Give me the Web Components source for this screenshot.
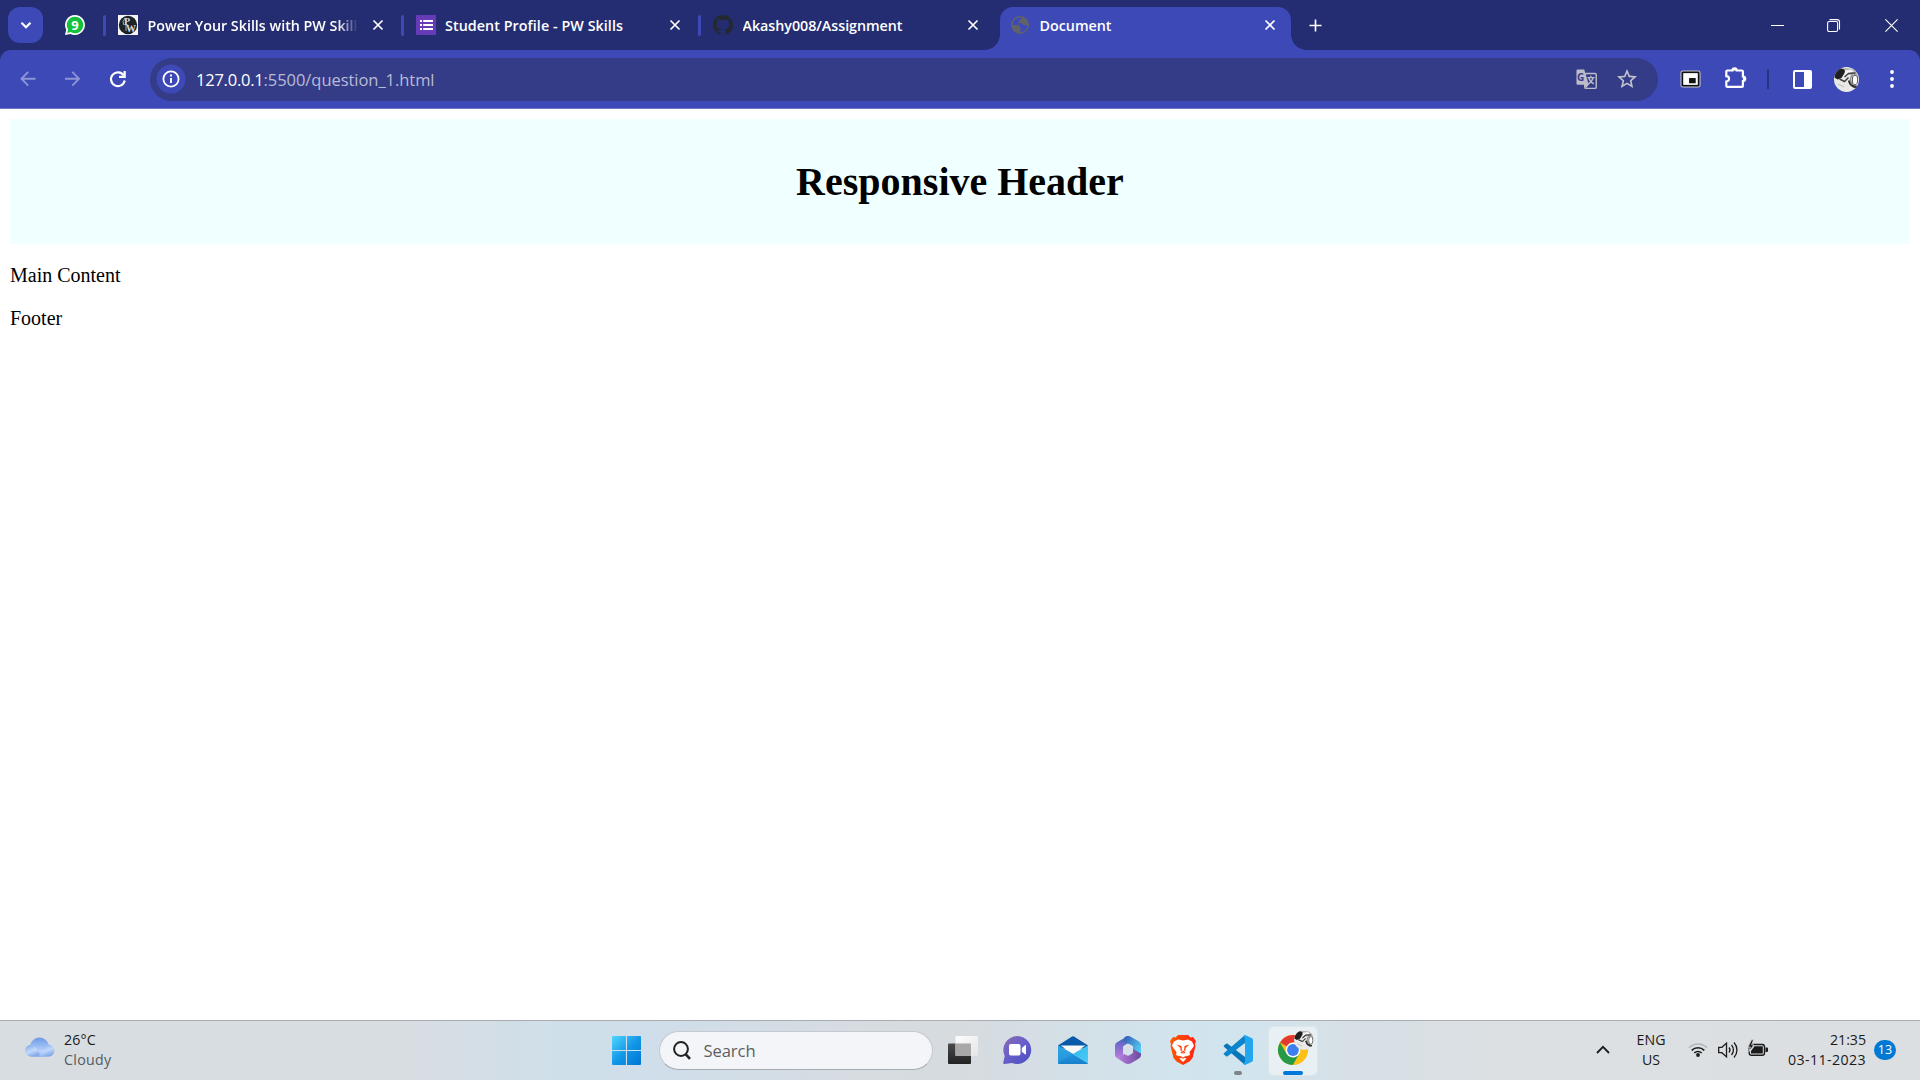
<!DOCTYPE html>
<html lang="en">
<head>
<meta charset="utf-8">
<title>Document</title>
<style>
html,body{margin:0;height:100%;overflow:hidden;background:#fff}
</style>
</head>
<body>
<desktop-screen></desktop-screen>
<script>
const define=(name,html,setup)=>{
  const t=document.createElement('template');t.innerHTML=html;
  customElements.define(name,class extends HTMLElement{
    constructor(){super();this.attachShadow({mode:'open'});}
    connectedCallback(){
      if(this.ready)return;this.ready=true;
      this.shadowRoot.append(t.content.cloneNode(true));
      if(setup)setup(this,this.shadowRoot);
    }
  });
};
const avatar=`<defs><clipPath id="c"><circle cx="12.5" cy="12.5" r="12.5"/></clipPath></defs><g clip-path="url(#c)"><path fill="#e9e9e7" d="M0 0h25v25H0z"/><path fill="#b5b5b3" d="M9 1l13 1 3 9-8-3-6-1z"/><path fill="#202020" d="M0 5q3-5 8-3.500 4 1 2.500 4.500l-3 5-4 1.500-3-2z"/><path fill="#f4f4f4" d="M11 3.500l6-1 3 2-6 2-3 3.500z"/><path fill="none" stroke="#444" stroke-width="1.500" d="M10.500 10l4-3.500 7-.5M5.500 12l5 2.500 4-4"/><path fill="none" stroke="#2b2b2b" stroke-width="2.400" d="M15 13.500c1 4 3 6.500 8 6.500"/><path fill="none" stroke="#8b8b8b" stroke-width="1.600" d="M18.500 8c-3 3-2.500 7 0 9.500"/><ellipse cx="21" cy="13" rx="2.600" ry="4.800" fill="#fff" stroke="#444" stroke-width=".9"/><path stroke="#bbb" d="M4 17l6 3"/></g>`;
const ICONS={
down:['0 0 12 8','<path d="M1.500 1.700 6 6.200l4.500-4.500" fill="none" stroke="#fff" stroke-width="2.200"/>'],
whatsapp:['0 0 20 20','<path fill="#fff" d="M10 0a10 10 0 1 1-4.600 18.900L0 20l1.200-5.200A10 10 0 0 1 10 0z"/><path fill="#15c13c" d="M10 1.700a8.300 8.300 0 1 1-4.300 15.400l-3.500.8.9-3.400A8.300 8.300 0 0 1 10 1.700z"/><text x="10" y="14.800" text-anchor="middle" font-family="Open Sans,sans-serif" font-weight="700" font-size="13" fill="#fff">9</text>'],
pw:['0 0 20 20','<path fill="#f5f5f5" d="M0 0h20v20H0z"/><circle cx="10" cy="10" r="9.200" fill="#1b2327"/><text font-family="Liberation Serif,serif" font-size="10" fill="#ddd"><tspan x="6" y="9.800">P</tspan><tspan x="8" y="16.500">W</tspan></text><path d="M6.800 3.500q-3 3-1 6.500M8 3.500V16" stroke="#ccc" stroke-width=".8" fill="none"/>'],
form:['0 0 20 20','<rect width="20" height="20" rx="1" fill="#673ab7"/><path fill="#fff" d="M4 5.100h2v2H4zM7.200 5.100H17v2H7.200zM4 9.100h2v2H4zM7.200 9.100H17v2H7.200zM4 13.100h2v2H4zM7.200 13.100H17v2H7.200z"/>'],
github:['0 0 16 16','<path fill="#24292f" d="M8 0C3.580 0 0 3.580 0 8c0 3.540 2.290 6.530 5.470 7.590.4.070.55-.17.55-.38 0-.19-.01-.82-.01-1.490-2.010.37-2.530-.49-2.690-.94-.09-.23-.48-.94-.82-1.130-.28-.15-.68-.52-.01-.53.63-.01 1.080.58 1.230.82.72 1.210 1.870.87 2.330.66.07-.52.28-.87.51-1.070-1.780-.2-3.640-.89-3.640-3.950 0-.87.31-1.590.82-2.150-.08-.2-.36-1.020.08-2.120 0 0 .67-.21 2.200.82.64-.18 1.320-.27 2-.27s1.360.09 2 .27c1.530-1.040 2.200-.82 2.200-.82.44 1.100.16 1.920.08 2.120.51.56.82 1.270.82 2.150 0 3.070-1.870 3.750-3.650 3.950.29.25.54.73.54 1.480 0 1.070-.01 1.930-.01 2.200 0 .21.15.46.55.38A8.010 8.010 0 0 0 16 8c0-4.420-3.580-8-8-8z"/>'],
globe:['0 0 18 18','<circle cx="9" cy="9" r="8.200" fill="none" stroke="#5f6368" stroke-width="1.500"/><path fill="#5f6368" d="M10.500.8c1 1.700-.7 2.200-1.700 2.800-.8.5.2 1.600-.8 2.300-.9.600-1.300.7-.3 1.400h3.200c1.100.2.700 1.900 1.800 2h4.200C17.500 4 14.500 1 10.500.8zM1 9h5.600c1.700.1 2.500 1 2.300 2.300-.3 1 .6.700 1.200 1.200.6.800-.4 1.200-.8 2.200-.3.900.1 1.700-.8 2.300C4.300 17 .8 13.500 1 9z"/>'],
x:['0 0 12 12','<path d="M1.500 1.500l9 9M10.500 1.500l-9 9" stroke="#fff" stroke-width="1.700"/>'],
plus:['0 0 14 14','<path d="M7 .5v13M.5 7h13" stroke="#fff" stroke-width="1.800"/>'],
min:['0 0 13 13','<path d="M0 6.500h13" stroke="#fff"/>'],
max:['0 0 13 13','<rect x=".6" y="2.500" width="10" height="10" rx="1.500" fill="none" stroke="#fff" stroke-width="1.100"/><path d="M2.500.6h7.500a2.500 2.500 0 0 1 2.500 2.500v7.500" fill="none" stroke="#fff" stroke-width="1.100"/>'],
wclose:['0 0 13 13','<path d="M.4.4l12.200 12.200M12.600.4.4 12.600" stroke="#fff" stroke-width="1.100"/>'],
back:['0 0 16 16','<path d="M16 8H2M8.500 1 1.500 8l7 7" fill="none" stroke="#8e95d6" stroke-width="1.900"/>'],
fwd:['0 0 16 16','<path d="M0 8h14M7.500 1l7 7-7 7" fill="none" stroke="#8e95d6" stroke-width="1.900"/>'],
reload:['0 0 16 16','<path d="M13.700 4.400A6.900 6.900 0 1 0 14.700 9.500" fill="none" stroke="#fff" stroke-width="2.200"/><path d="M15.800 0v7H9V4.800h4.500V0z" fill="#fff"/>'],
info:['0 0 30 30','<circle cx="15" cy="15" r="14.600" fill="#3c49b7"/><circle cx="15" cy="15" r="7.600" fill="none" stroke="#fff" stroke-width="1.800"/><path d="M15 14v5M15 10.500v2" stroke="#fff" stroke-width="1.900"/>'],
translate:['0 0 22 22','<rect x="9.200" y="4.700" width="12" height="15.600" rx="1.300" fill="none" stroke="#bcbdc9" stroke-width="1.500"/><path fill="#bcbdc9" d="M1.800.5h6.800l4.800 15.900H1.800A1.300 1.300 0 0 1 .5 15.100V1.800A1.300 1.300 0 0 1 1.800.5zM8.800 16.400h4.600l-3 3.700z"/><text x="1.100" y="13" font-family="Open Sans,sans-serif" font-weight="700" font-size="10.500" fill="#343c88">G</text><path d="M12 9h7.500M15.600 7.200V9M13.200 9c1 3 3 5.200 5.500 6.500M18 9c-.9 3.300-2.900 5.500-5.500 7" fill="none" stroke="#bcbdc9" stroke-width="1.400"/>'],
star:['0 0 24 24','<path fill="#c3c4ce" d="M22 9.240l-7.190-.62L12 2 9.190 8.630 2 9.240l5.460 4.730L5.820 21 12 17.270 18.180 21l-1.630-7.030L22 9.240zM12 15.400l-3.760 2.270 1-4.280-3.320-2.880 4.380-.38L12 6.100l1.710 4.040 4.380.38-3.320 2.880 1 4.280L12 15.400z"/>'],
pip:['0 0 22 19','<rect x=".4" y=".4" width="21.200" height="18.200" rx="2.500" fill="#c9c9c9"/><rect x="1.500" y="1.500" width="19" height="16" rx="1.500" fill="#111"/><rect x="3.300" y="3.300" width="15.400" height="12.400" fill="#fff"/><rect x="9.500" y="8.500" width="7" height="5.500" fill="#111"/>'],
puzzle:['0 0 22 22','<path d="M1.300 4.500a1 1 0 0 1 1-1h5.200a2.100 2.100 0 0 1 4.200 0h5.200a1 1 0 0 1 1 1v5a2.300 2.300 0 0 1 0 4.600v4.800a1 1 0 0 1-1 1H2.300a1 1 0 0 1-1-1v-4.300a2.500 2.500 0 0 0 0-5.500z" fill="none" stroke="#fff" stroke-width="2.200"/><path d="M7.500 3.500a2.100 2.100 0 0 1 4.200 0zM17.900 9.500a2.300 2.300 0 0 1 0 4.600z" fill="#fff"/>'],
panel:['0 0 19 19','<path fill="#fff" fill-rule="evenodd" d="M2 0h15a2 2 0 0 1 2 2v15a2 2 0 0 1-2 2H2a2 2 0 0 1-2-2V2a2 2 0 0 1 2-2zM2 2v15h9V2z"/>'],
avatar:['0 0 25 25',avatar],
dots:['0 0 4 18','<circle cx="2" cy="2" r="1.900" fill="#fff"/><circle cx="2" cy="9" r="1.900" fill="#fff"/><circle cx="2" cy="16" r="1.900" fill="#fff"/>'],
cloud:['0 0 30 20','<defs><linearGradient id="a" x1="0" y1="0" x2="0" y2="1"><stop stop-color="#6d9ae6"/><stop offset=".75" stop-color="#b9d3fb"/><stop offset="1" stop-color="#7da6e8"/></linearGradient><linearGradient id="b" x1="0" y1="0" x2=".5" y2="1"><stop stop-color="#7ba4e9"/><stop offset=".6" stop-color="#c2d9fb"/><stop offset="1" stop-color="#82a9e9"/></linearGradient></defs><path d="M6 19.500a6 6 0 0 1-1-11.500A9.800 9.800 0 0 1 24 8a6 6 0 0 1 0 11.500z" fill="url(#a)"/><path d="M6 19.500a5.900 5.900 0 1 1 3.500-10.600c3 2 3.500 6 6.500 10.600z" fill="url(#b)"/><path d="M24 19.500a5.900 5.900 0 1 0-4.500-10.200C17 12 18 16 13 19.500z" fill="url(#b)" opacity=".9"/>'],
start:['0 0 29 29','<defs><linearGradient id="a" gradientUnits="userSpaceOnUse" x1="0" y1="0" x2="29" y2="29"><stop stop-color="#51d5ff"/><stop offset=".5" stop-color="#1298e7"/><stop offset="1" stop-color="#0074d4"/></linearGradient></defs><path fill="url(#a)" d="M1 0h12.900v13.900H0V1a1 1 0 0 1 1-1zM15 0h13a1 1 0 0 1 1 1v12.900H15zM0 15h13.900v14H1a1 1 0 0 1-1-1zM15 15h14v13a1 1 0 0 1-1 1H15z"/>'],
search:['0 0 18 19','<circle cx="8" cy="8" r="6.900" fill="none" stroke="#222" stroke-width="2"/><path d="M12.800 13.300l4.200 4.500" stroke="#222" stroke-width="2.600"/>'],
task:['0 0 30 28','<defs><linearGradient id="a" x1="0" y1="0" x2="0" y2="1"><stop stop-color="#4a4a4a"/><stop offset="1" stop-color="#222"/></linearGradient><linearGradient id="b" x1="0" y1="0" x2="1" y2="1"><stop stop-color="#fff"/><stop offset="1" stop-color="#e5e5e5"/></linearGradient></defs><rect y="7.500" width="23" height="20.500" rx="1" fill="url(#a)"/><rect x="7.500" width="22.500" height="20" rx="1" fill="url(#b)" opacity=".95"/><path fill="#a8a8a8" d="M7.500 7.500H23V20H7.500z"/>'],
chat:['0 0 29 28','<defs><linearGradient id="a" x1="0" y1="0" x2=".9" y2="1"><stop stop-color="#8d6bb0"/><stop offset=".45" stop-color="#6b60c9"/><stop offset="1" stop-color="#4b50c2"/></linearGradient></defs><path fill="url(#a)" d="M14.500 0a14 14 0 1 1-5.500 27L1.500 28c-1 0-1.400-.8-1.200-1.800L1.700 20A14 14 0 0 1 14.500 0z"/><rect x="6" y="8" width="11.500" height="11.500" rx="1.800" fill="#fff"/><path fill="#fff" d="M18.800 12l3.200-2.700c.6-.4 1-.2 1 .5v8c0 .7-.5.9-1 .5l-3.200-2.500z"/>'],
mail:['0 0 30 28','<defs><linearGradient id="a" x1="0" y1="0" x2="1" y2="1"><stop stop-color="#35b7ec"/><stop offset="1" stop-color="#45cdf8"/></linearGradient><linearGradient id="b" x1="0" y1="0" x2="0" y2="1"><stop stop-color="#2fa6e4"/><stop offset="1" stop-color="#1680cc"/></linearGradient></defs><path fill="#0a58a8" d="M0 9.500 14 .5q1-.6 2 0l14 9-4 3H4z"/><path fill="#f8f8f8" d="M2.500 9.500h25L15 18z"/><path fill="url(#b)" d="M0 9.500 15 18l15 9.200q-.2.800-1 .8H1a1 1 0 0 1-1-1z"/><path fill="url(#a)" d="M30 9.500V27.200L15 18z"/><path fill="#2ba3e3" d="M0 9.500 15 18 0 27z" opacity=".6"/>'],
m365:['0 0 26 28','<defs><linearGradient id="a" x1="0" y1="0" x2="0" y2="1"><stop stop-color="#3b62b7"/><stop offset=".55" stop-color="#876fd1"/><stop offset="1" stop-color="#bb79dc"/></linearGradient><linearGradient id="b" x1="0" y1="0" x2="1" y2=".8"><stop stop-color="#3358b4"/><stop offset="1" stop-color="#58d4f8"/></linearGradient><linearGradient id="d" x1="0" y1="0" x2="1" y2="0"><stop stop-color="#ba80e1"/><stop offset="1" stop-color="#6b4a9d"/></linearGradient></defs><path fill="url(#a)" d="M13 0 2 6.300Q0 7.500 0 9.800v9q0 2.200 2 3.200l6-3.300V10.500L17 5z"/><path fill="url(#b)" d="M9.500 1.200q3.500-2.200 7 0L24 5.500q2 1.200 2 3.500v10l-8-4.700v-4L9 6z"/><path fill="url(#d)" d="M2 22l7-4 4 1.500 5-3V13l8 4.500v1.800q0 2-2 3.200l-8 4.700q-3 1.500-6 0z"/><path fill="#d3e0e9" d="M8.300 11.500q0-1.400 1.200-2l2.300-1.400q1.200-.7 2.400 0l2.300 1.400q1.200.6 1.200 2v4.500q0 1.300-1.200 2l-2.300 1.300q-1.200.7-2.400 0L9.500 18q-1.200-.7-1.200-2z"/>'],
brave:['0 0 26 30','<defs><linearGradient id="a"><stop stop-color="#ff5a00"/><stop offset="1" stop-color="#ff2414"/></linearGradient></defs><path fill="url(#a)" d="M8 0h10l2.500 2.500L23 2l3 4-1 3 .5 2-3 12-3 3.500L13 30l-6.500-3.500-3-3.500-3-12L1 9 0 6l3-4 2.500.5z"/><path fill="#fff" d="M8 4.500l5 1 5-1 4 2 2 4-1 2-3.500 4.500.5 3-4 1.500L13 23.500 10 21.500 6 20l.5-3L3 12.500l-1-2 2-4zM13 22l3.500 1.500L13 27l-3.500-3.500z"/><path fill="#ff4310" d="M6.500 9.500 11.500 11l.6 5-1.600 1.500 2.500 1.700 2.500-1.700-1.600-1.500.6-5 5-1.500-4 3.500.2 2.500-2.700.2.500 3-.5.500-.5-.5.500-3-2.700-.2.200-2.500zM9.500 20.500 13 22.500l3.500-2-.2 1.600L13 23.700l-3.300-1.600z"/>'],
vscode:['0 0 30 30','<path fill="#0877b9" d="M1 10.500l2-1.800q.8-.5 1.600 0L22 22v8L.9 11.800Q.2 11 1 10.500z"/><path fill="#0a84cb" d="M1 19.500l2 1.800q.8.500 1.600 0L22 8V0L.9 18.200q-.7.800.1 1.300z"/><path fill="#24a5ef" d="M22 0l7 3.200q1 .5 1 1.700v20.200q0 1.200-1 1.700L22 30q-1 0-1.500-1.500L22 27V3l-1.500-1.500Q21 0 22 0z"/>'],
chrome:['0 0 30 30','<circle cx="15" cy="15" r="15" fill="#fbc116"/><path fill="#e33b2e" d="M15 15 2 7.500A15 15 0 0 1 28 7.500H15z"/><path fill="#259b48" d="M15 15l6.500 3.800L15 30A15 15 0 0 1 2 7.500l6.500 11.200z"/><path fill="#fbc116" d="M15 8h13a15 15 0 0 1-13 22l6.400-11.200z"/><circle cx="15" cy="15" r="7.400" fill="#fff"/><circle cx="15" cy="15" r="5.900" fill="#3d7fee"/>'],
up:['0 0 14 9','<path d="M1 8l6-6.200L13 8" fill="none" stroke="#1b1b1b" stroke-width="1.800"/>'],
wifi:['0 0 20 15','<g fill="none" stroke-width="1.400"><path d="M1 5.700a12.700 12.700 0 0 1 18 0" stroke="#b3b5b8"/><path d="M3.700 8.400a8.900 8.900 0 0 1 12.600 0M6.300 11a5.200 5.200 0 0 1 7.400 0" stroke="#1b1b1b" stroke-width="1.600"/></g><circle cx="10" cy="13" r="1.900" fill="#1b1b1b"/>'],
volume:['0 0 20 18','<g fill="none" stroke="#1b1b1b" stroke-width="1.300"><path d="M.7 6.300v5.400h3.200l4.600 4.200V2.100L3.900 6.300z"/><path d="M11 6.500a4 4 0 0 1 0 5M13.500 4a7.500 7.500 0 0 1 0 10"/><path d="M16 1.500a11 11 0 0 1 0 15"/></g>'],
battery:['0 0 20 16','<rect x="1.200" y="4.500" width="15.300" height="10.700" rx="2.300" fill="none" stroke="#1b1b1b" stroke-width="1.400"/><path fill="#1b1b1b" d="M17.500 7.500h1.500q1 0 1 1v2.500q0 1-1 1h-1.500zM6.500 6.300h8.300v7.200H3V11z"/><path fill="#1b1b1b" stroke="#dde0e3" stroke-width=".8" d="M3.500-.2 0 7h2.300L1 11.500 6 5H3.700L5.500-.2z"/>']
};
/* ui-icon: vector glyph chosen by name, sized by w and h */
define('ui-icon','<style>:host{display:block;flex:none}svg{display:block;width:100%;height:100%;overflow:visible}</style>',(el,r)=>{
  const [vb,body]=ICONS[el.getAttribute('name')];
  el.style.width=el.getAttribute('w')+'px';el.style.height=el.getAttribute('h')+'px';
  const t=document.createElement('template');t.innerHTML=`<svg viewBox="${vb}">${body}</svg>`;r.append(t.content);
});
/* fit-text: one line of text tracked to a fixed measure */
define('fit-text','<style>:host{display:block;flex:none;white-space:pre}span{display:inline-block}</style><span><slot></slot></span>',(el,r)=>{
  const s=r.querySelector('span'),w=+el.getAttribute('w'),n=el.textContent.length;
  s.style.letterSpacing=((w-s.getBoundingClientRect().width)/n).toFixed(3)+'px';
  el.style.width=w+'px';
});
define('browser-tab',`<style>
:host{display:flex;width:297.500px;height:50px;flex:none;align-items:center;box-sizing:border-box;padding:0 0 0 12px;font:600 14.300px "Open Sans",sans-serif;color:#fff}
.t{width:210px;margin-left:9.500px;overflow:hidden;flex:none}
:host([fade]) .t{-webkit-mask:linear-gradient(90deg,#000 190px,transparent 210px);mask:linear-gradient(90deg,#000 190px,transparent 210px)}
.x{margin-left:14px}
.sep{width:3px;height:21px;border-radius:2px;background:#3c49b7;margin-left:auto}
:host([last]) .sep,:host([active]) .sep{display:none}
:host([active]){position:relative;width:291px;margin-left:1.500px;height:43px;margin-top:7px;background:#3c49b7;border-radius:13px 13px 0 0;padding:0 0 7px 11px}
:host([active]) .t{width:212px;margin-left:10.500px}
:host([active]) .x{margin-left:12.500px}
:host([active])::before,:host([active])::after{content:"";position:absolute;bottom:0;left:-15px;width:15px;height:15px;background:radial-gradient(circle at 0 0,transparent 14.500px,#3c49b7 15px)}
:host([active])::after{left:auto;right:-15px;background:radial-gradient(circle at 100% 0,transparent 14.500px,#3c49b7 15px)}
</style><slot name="icon"></slot><div class="t"><slot></slot></div><ui-icon class="x" name="x" w="12" h="12"></ui-icon><i class="sep"></i>`);
define('tab-strip',`<style>
:host{display:flex;height:50px;background:#252d72;align-items:center}
.s{display:flex;align-items:center;justify-content:center;width:35px;height:36px;border-radius:12px;background:#3c49b7;margin-left:8px}
.wa{margin-left:22px}.sep{width:3px;height:21px;border-radius:2px;background:#3c49b7;margin-left:18px}
.plus{margin-left:18px}.win{display:flex;align-items:center;margin-left:auto;padding-right:22.500px}
</style>
<div class="s"><ui-icon name="down" w="12" h="8"></ui-icon></div>
<ui-icon class="wa" name="whatsapp" w="20" h="20"></ui-icon><i class="sep"></i>
<browser-tab fade><ui-icon slot="icon" name="pw" w="20" h="20"></ui-icon><fit-text w="217">Power Your Skills with PW Skills</fit-text></browser-tab>
<browser-tab><ui-icon slot="icon" name="form" w="20" h="20"></ui-icon><fit-text w="178">Student Profile - PW Skills</fit-text></browser-tab>
<browser-tab last><ui-icon slot="icon" name="github" w="20" h="20"></ui-icon><fit-text w="160">Akashy008/Assignment</fit-text></browser-tab>
<browser-tab active><ui-icon slot="icon" name="globe" w="18" h="18"></ui-icon><fit-text w="72">Document</fit-text></browser-tab>
<ui-icon class="plus" name="plus" w="13" h="13"></ui-icon>
<div class="win"><ui-icon name="min" w="13" h="13"></ui-icon><ui-icon name="max" w="13" h="13" style="margin:0 44.500px 0 43px"></ui-icon><ui-icon name="wclose" w="13" h="13"></ui-icon></div>`);
define('nav-bar',`<style>
:host{display:block;height:59px;background:#252d72}
.b{display:flex;align-items:center;height:59px;box-sizing:border-box;padding:0 0 0 20px;background:#3c49b7;border-bottom:1px solid #6c76ca;border-radius:11px 11px 0 0}
.o{display:flex;align-items:center;width:1508px;height:43px;border-radius:22px;background:#343c88;margin-left:24px;box-sizing:border-box;padding:0 18.500px 0 6.500px;font:16.500px "Open Sans",sans-serif;color:#b9bbd4}
.h{color:#fff;margin-left:10px}
.sep{width:2px;height:20px;background:#2a3380;margin-left:20px}
</style><div class="b">
<ui-icon name="back" w="15.500" h="15.500"></ui-icon><ui-icon name="fwd" w="15.500" h="15.500" style="margin-left:29.500px"></ui-icon><ui-icon name="reload" w="16" h="16" style="margin-left:29px"></ui-icon>
<div class="o"><ui-icon name="info" w="30" h="30"></ui-icon><fit-text class="h" w="67.500">127.0.0.1</fit-text><fit-text w="171">:5500/question_1.html</fit-text>
<ui-icon name="translate" w="21" h="21" style="margin-left:auto"></ui-icon><ui-icon name="star" w="24" h="24" style="margin-left:18px"></ui-icon></div>
<ui-icon name="pip" w="21" h="18" style="margin-left:22.500px"></ui-icon>
<ui-icon name="puzzle" w="22" h="22" style="margin-left:24px;margin-top:-3px"></ui-icon>
<i class="sep"></i>
<ui-icon name="panel" w="19" h="19" style="margin-left:23.500px"></ui-icon>
<ui-icon name="avatar" w="25" h="25" style="margin-left:22.500px"></ui-icon>
<ui-icon name="dots" w="4" h="18" style="margin-left:30.500px"></ui-icon>
</div>`);
define('web-page',`<style>
:host{display:block;flex:1;padding:10px;background:#fff;font:20px/23px "Liberation Serif",serif;color:#000;box-sizing:border-box}
header{display:flex;height:125px;align-items:center;justify-content:center;background:#f0ffff}
h1{margin:0;font-size:40px;line-height:46px}
p{margin:20px 0}
</style><header><h1>Responsive Header</h1></header><p>Main Content</p><p>Footer</p>`);
define('task-bar',`<style>
:host{display:flex;height:60px;box-sizing:border-box;border-top:1px solid #aaaeb2;align-items:center;font:14.200px/20px "Open Sans",sans-serif;color:#1b1b1b;
background:linear-gradient(90deg,#d8dde1 0,#d8dde2 400px,#cfdfe9 560px,#cfdeea 650px,#d6dce1 850px,#d6dbdf 960px,#d2e3ec 1150px,#d1e5ef 1230px,#d7e0e6 1350px,#dce0e3 1500px,#dbdfe2 100%)}
.w{margin:-2px 0 0 9px;width:548px}.c{color:#555b60}
.s{display:flex;align-items:center;box-sizing:border-box;width:274px;height:39px;border-radius:20px;background:#f3f5f8;border:1px solid #c3c9cf;border-bottom-color:#a4abb1;margin-left:17.500px;padding-left:13px;font-size:16.600px;color:#5d5f61}
.col{display:flex;flex-direction:column;align-items:center}
.r{align-items:flex-end}
.app{position:relative;display:flex;align-items:center;justify-content:center;width:48px;height:48px;box-sizing:border-box;margin-left:16px}
.app.on{background:#e9f0f4;border-radius:5px;box-shadow:0 0 0 1px #dde6eb}
.app ui-icon:first-child{margin-top:-1px}
.app::after{content:"";position:absolute;bottom:0;left:20px;width:8px;height:4px;border-radius:2px;background:#7d8387}
.app.on::after{left:14px;width:20px;background:#0078d7}
.av{position:absolute;left:25px;top:3px}
.n{width:22px;height:20px;border-radius:11px;background:#0078d4;color:#fff;font-size:12.500px;display:flex;justify-content:center;align-items:center;margin:-2px 0 0 8px}
</style>
<ui-icon name="cloud" w="30" h="20" style="margin:-7px 0 0 25px"></ui-icon>
<div class="w"><fit-text w="32">26°C</fit-text><fit-text class="c" w="47.500">Cloudy</fit-text></div>
<ui-icon name="start" w="29" h="29"></ui-icon>
<div class="s"><ui-icon name="search" w="18" h="19"></ui-icon><fit-text w="52" style="margin-left:13px">Search</fit-text></div>
<ui-icon name="task" w="30" h="28" style="margin-left:15.500px;margin-top:-1px"></ui-icon>
<ui-icon name="chat" w="29" h="28" style="margin-left:25px;margin-top:-1px"></ui-icon>
<ui-icon name="mail" w="30" h="28" style="margin-left:26px;margin-top:-1px"></ui-icon>
<ui-icon name="m365" w="26" h="28" style="margin-left:27px;margin-top:-1px"></ui-icon>
<ui-icon name="brave" w="26" h="30" style="margin-left:29px;margin-top:-1px"></ui-icon>
<div class="app" style="margin-left:18px"><ui-icon name="vscode" w="30" h="30"></ui-icon></div>
<div class="app on" style="margin-left:7px"><ui-icon name="chrome" w="30" h="30"></ui-icon><ui-icon class="av" name="avatar" w="20" h="20"></ui-icon></div>
<ui-icon name="up" w="14" h="9" style="margin-left:279px;margin-top:-2px"></ui-icon>
<div class="col" style="margin:-1px 0 0 26px;width:30px"><fit-text w="29">ENG</fit-text><fit-text w="18">US</fit-text></div>
<ui-icon name="wifi" w="20" h="15" style="margin-left:22px;margin-top:-2px"></ui-icon>
<ui-icon name="volume" w="20" h="18" style="margin-left:10px;margin-top:-2px"></ui-icon>
<ui-icon name="battery" w="20" h="16" style="margin-left:10px;margin-top:-5px"></ui-icon>
<div class="col r" style="margin:-2px 0 0 20px;width:78px"><fit-text w="36">21:35</fit-text><fit-text w="78">03-11-2023</fit-text></div>
<div class="n">13</div>`);
define('desktop-screen',`<style>:host{display:flex;flex-direction:column;width:1920px;height:1080px;overflow:hidden}</style>
<tab-strip></tab-strip><nav-bar></nav-bar><web-page></web-page><task-bar></task-bar>`);
</script>
</body>
</html>
